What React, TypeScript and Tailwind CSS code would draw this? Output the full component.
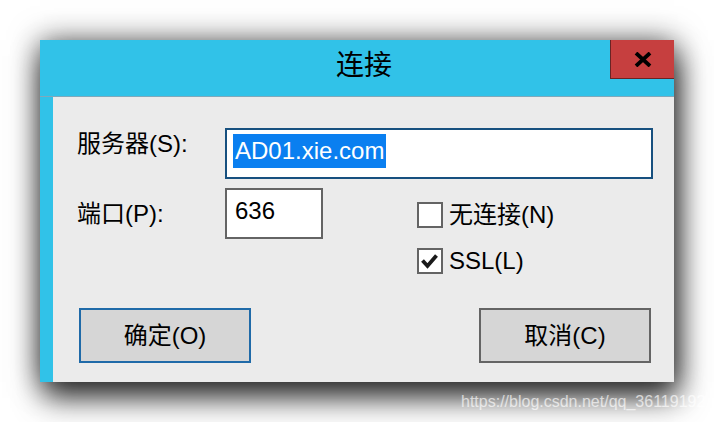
import React from "react";

function CloseX() {
  return (
    <svg width="18" height="15" viewBox="0 0 18 15">
      <path d="M2 1 L16 14 M16 1 L2 14" stroke="#000" strokeWidth="3.8" strokeLinecap="butt" fill="none" />
    </svg>
  );
}

function Check() {
  return (
    <svg width="22" height="22" viewBox="0 0 22 22">
      <path d="M3.5 10.5 L8.5 16 L17.5 5.5" stroke="#1a1a1a" strokeWidth="3.8" fill="none" strokeLinejoin="miter" />
    </svg>
  );
}

function CheckBox({ checked, label }: { checked?: boolean; label: string }) {
  return (
    <div className="flex items-center gap-[6px]">
      <div className="w-[26px] h-[26px] border-2 border-[#646464] bg-white flex items-center justify-center">
        {checked ? <Check /> : null}
      </div>
      <span className="text-[24px] leading-[26px] text-black">{label}</span>
    </div>
  );
}

export default function App() {
  return (
    <div className="relative w-[714px] h-[422px] overflow-hidden bg-white font-['Liberation_Sans','Noto_Sans_CJK_SC',sans-serif]">
      <div className="pt-[40px] pl-[40px]">
        <div className="w-[634px] h-[342px] flex flex-col shadow-[0_0_28px_rgba(0,0,0,0.55),4px_16px_28px_rgba(0,0,0,0.75)]">
          {/* title bar */}
          <div className="relative h-[57px] bg-[#31c2e8] border-b border-[#7fa9bb] flex items-center justify-center pl-[14px]">
            <span className="text-[28px] leading-[28px] text-black -mt-[4px]">连接</span>
            <div className="absolute right-0 top-0 w-[64px] h-[39px] bg-[#c63f3f] border-l border-b border-[#6a2424] flex items-center justify-center">
              <CloseX />
            </div>
          </div>
          {/* body */}
          <div className="flex flex-1">
            <div className="w-[13px] bg-[#31c2e8]" />
            <div className="flex-1 bg-[#ebebeb] pl-[24px] pr-[21px] pt-[31px] text-black">
              {/* row 1 */}
              <div className="flex items-start">
                <div className="w-[148px] mt-[4px] text-[24px] leading-[24px]">服务器(S):</div>
                <div className="flex-1 h-[51px] border-2 border-[#17507f] bg-white pt-[4px] pl-[6px]">
                  <span className="inline-block bg-[#0a7ff0] text-white text-[24px] leading-[34px] px-[2px]">AD01.xie.com</span>
                </div>
              </div>
              {/* row 2 */}
              <div className="flex items-start mt-[9px]">
                <div className="w-[148px] mt-[14px] text-[24px] leading-[24px]">端口(P):</div>
                <div className="w-[98px] h-[51px] border-2 border-[#646464] bg-white pt-[4px] pl-[6px]">
                  <span className="inline-block text-[24px] leading-[34px] px-[2px]">636</span>
                </div>
                <div className="ml-[94px] pt-[14px] flex flex-col gap-[20px]">
                  <CheckBox label="无连接(N)" />
                  <CheckBox checked label="SSL(L)" />
                </div>
              </div>
              {/* buttons */}
              <div className="flex justify-between px-[2px] mt-[34px]">
                <div className="w-[172px] h-[55px] border-2 border-[#1f6aa8] bg-[#d6d6d6] flex items-center justify-center text-[24px]">
                  确定(O)
                </div>
                <div className="w-[172px] h-[55px] border-2 border-[#646464] bg-[#d6d6d6] flex items-center justify-center text-[24px]">
                  取消(C)
                </div>
              </div>
            </div>
          </div>
        </div>
      </div>
      <div className="absolute left-[461px] top-[392px] text-[16px] leading-[20px] text-white/65 whitespace-nowrap font-['Liberation_Sans',sans-serif]">
        https://blog.csdn.net/qq_36119192
      </div>
    </div>
  );
}
